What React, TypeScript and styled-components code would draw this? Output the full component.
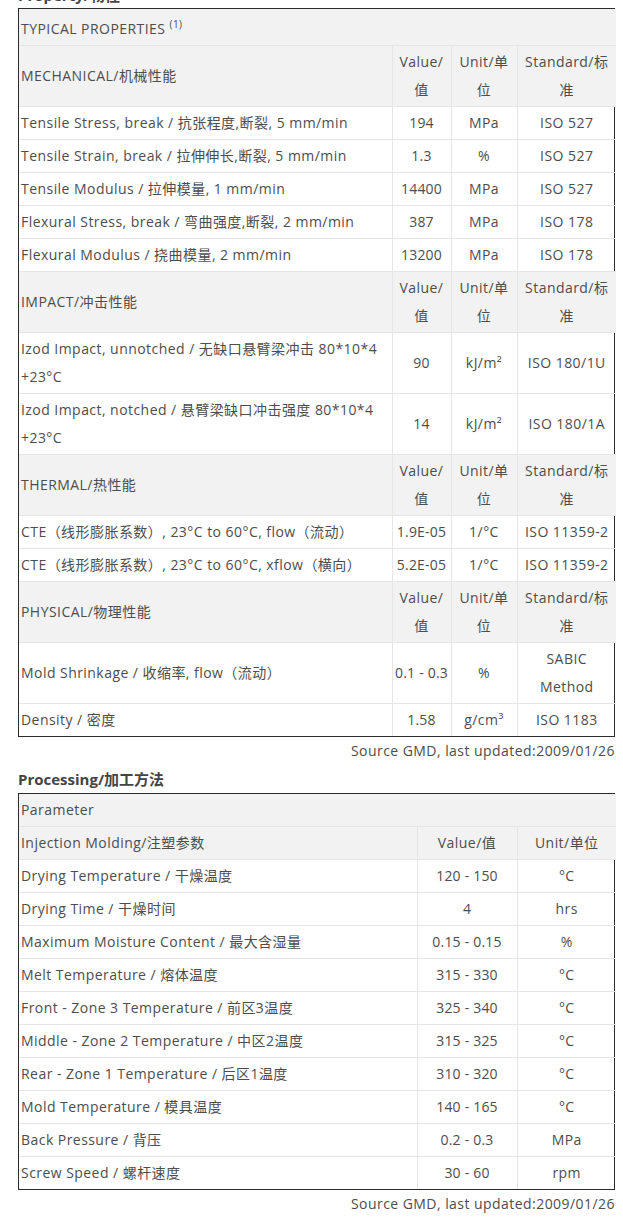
import React from 'react';
import styled, { createGlobalStyle } from 'styled-components';

const GlobalStyle = createGlobalStyle`
  html, body {
    margin: 0;
    padding: 0;
    background: #ffffff;
  }
  body {
    font-family: 'Open Sans', 'Noto Sans CJK SC', sans-serif;
    color: #4d4d4d;
  }
`;

type Row = { label: string; value: string; unit: React.ReactNode; std?: string };

const mechanical: Row[] = [
  { label: 'Tensile Stress, break / 抗张程度,断裂, 5 mm/min', value: '194', unit: 'MPa', std: 'ISO 527' },
  { label: 'Tensile Strain, break / 拉伸伸长,断裂, 5 mm/min', value: '1.3', unit: '%', std: 'ISO 527' },
  { label: 'Tensile Modulus / 拉伸模量, 1 mm/min', value: '14400', unit: 'MPa', std: 'ISO 527' },
  { label: 'Flexural Stress, break / 弯曲强度,断裂, 2 mm/min', value: '387', unit: 'MPa', std: 'ISO 178' },
  { label: 'Flexural Modulus / 挠曲模量, 2 mm/min', value: '13200', unit: 'MPa', std: 'ISO 178' },
];

const impact: Row[] = [
  { label: 'Izod Impact, unnotched / 无缺口悬臂梁冲击 80*10*4 +23°C', value: '90', unit: 'kJ/m²', std: 'ISO 180/1U' },
  { label: 'Izod Impact, notched / 悬臂梁缺口冲击强度 80*10*4 +23°C', value: '14', unit: 'kJ/m²', std: 'ISO 180/1A' },
];

const thermal: Row[] = [
  { label: 'CTE（线形膨胀系数）, 23°C to 60°C, flow（流动）', value: '1.9E-05', unit: '1/°C', std: 'ISO 11359-2' },
  { label: 'CTE（线形膨胀系数）, 23°C to 60°C, xflow（横向）', value: '5.2E-05', unit: '1/°C', std: 'ISO 11359-2' },
];

const physical: Row[] = [
  { label: 'Mold Shrinkage / 收缩率, flow（流动）', value: '0.1 - 0.3', unit: '%', std: 'SABIC Method' },
  { label: 'Density / 密度', value: '1.58', unit: 'g/cm³', std: 'ISO 1183' },
];

const processing: Row[] = [
  { label: 'Drying Temperature / 干燥温度', value: '120 - 150', unit: '°C' },
  { label: 'Drying Time / 干燥时间', value: '4', unit: 'hrs' },
  { label: 'Maximum Moisture Content / 最大含湿量', value: '0.15 - 0.15', unit: '%' },
  { label: 'Melt Temperature / 熔体温度', value: '315 - 330', unit: '°C' },
  { label: 'Front - Zone 3 Temperature / 前区3温度', value: '325 - 340', unit: '°C' },
  { label: 'Middle - Zone 2 Temperature / 中区2温度', value: '315 - 325', unit: '°C' },
  { label: 'Rear - Zone 1 Temperature / 后区1温度', value: '310 - 320', unit: '°C' },
  { label: 'Mold Temperature / 模具温度', value: '140 - 165', unit: '°C' },
  { label: 'Back Pressure / 背压', value: '0.2 - 0.3', unit: 'MPa' },
  { label: 'Screw Speed / 螺杆速度', value: '30 - 60', unit: 'rpm' },
];

const SectionHead = ({ title }: { title: string }) => (
  <tr>
    <HeadCell>{title}</HeadCell>
    <HeadCell $center>Value/值</HeadCell>
    <HeadCell $center>Unit/单位</HeadCell>
    <HeadCell $center>Standard/标准</HeadCell>
  </tr>
);

const DataRows = ({ rows, withStd = true }: { rows: Row[]; withStd?: boolean }) => (
  <>
    {rows.map((r) => (
      <tr key={r.label}>
        <Cell>{r.label}</Cell>
        <Cell $center $nowrap>
          {r.value}
        </Cell>
        <Cell $center>{r.unit}</Cell>
        {withStd && <Cell $center>{r.std}</Cell>}
      </tr>
    ))}
  </>
);

export default function App() {
  return (
    <Page>
      <GlobalStyle />
      <Heading $clipped>Property/物性</Heading>
      <Frame>
        <Table>
          <colgroup>
            <col style={{ width: 373 }} />
            <col style={{ width: 59 }} />
            <col style={{ width: 66 }} />
            <col style={{ width: 99 }} />
          </colgroup>
          <tbody>
            <tr>
              <TitleCell colSpan={4}>
                TYPICAL PROPERTIES <Sup>(1)</Sup>
              </TitleCell>
            </tr>
            <SectionHead title="MECHANICAL/机械性能" />
            <DataRows rows={mechanical} />
            <SectionHead title="IMPACT/冲击性能" />
            <DataRows rows={impact} />
            <SectionHead title="THERMAL/热性能" />
            <DataRows rows={thermal} />
            <SectionHead title="PHYSICAL/物理性能" />
            <DataRows rows={physical} />
          </tbody>
        </Table>
      </Frame>
      <Source>Source GMD, last updated:2009/01/26</Source>

      <Heading>Processing/加工方法</Heading>
      <Frame>
        <Table>
          <colgroup>
            <col style={{ width: 398 }} />
            <col style={{ width: 100 }} />
            <col style={{ width: 99 }} />
          </colgroup>
          <tbody>
            <tr>
              <HeadCell colSpan={3}>Parameter</HeadCell>
            </tr>
            <tr>
              <HeadCell>Injection Molding/注塑参数</HeadCell>
              <HeadCell $center>Value/值</HeadCell>
              <HeadCell $center>Unit/单位</HeadCell>
            </tr>
            <DataRows rows={processing} withStd={false} />
          </tbody>
        </Table>
      </Frame>
      <Source>Source GMD, last updated:2009/01/26</Source>
    </Page>
  );
}

const Page = styled.div`
  width: 597px;
  padding: 0 8px 0 18px;
  font-size: 14px;
  line-height: 28px;
  letter-spacing: 0.45px;
`;

const Heading = styled.h4<{ $clipped?: boolean }>`
  margin: ${(p) => (p.$clipped ? '-19px 0 0' : '0')};
  height: ${(p) => (p.$clipped ? '27px' : '28px')};
  font-size: 15px;
  font-weight: 700;
  line-height: 28px;
  letter-spacing: 0;
  color: #444;
`;

const Frame = styled.div`
  border: 1px solid #2b2b2b;
`;

const Table = styled.table`
  width: 595px;
  border-collapse: collapse;
  table-layout: fixed;
  border-style: hidden;
`;

const Cell = styled.td<{ $center?: boolean; $nowrap?: boolean }>`
  padding: 2px;
  border: 1px solid #e6e6e6;
  text-align: ${(p) => (p.$center ? 'center' : 'left')};
  white-space: ${(p) => (p.$nowrap ? 'nowrap' : 'normal')};
  letter-spacing: ${(p) => (p.$nowrap ? '0.2px' : 'inherit')};
  vertical-align: middle;
  color: #4d4d4d;
  font-weight: 400;
`;

const HeadCell = styled(Cell)`
  background: #f2f2f2;
`;

const TitleCell = styled(HeadCell)`
  height: 32px;
  padding-top: 4px;
  padding-bottom: 0;
`;

const Sup = styled.sup`
  font-size: 10px;
  line-height: 0;
  vertical-align: 6px;
`;

const Source = styled.div`
  text-align: right;
  color: #4d4d4d;
`;
